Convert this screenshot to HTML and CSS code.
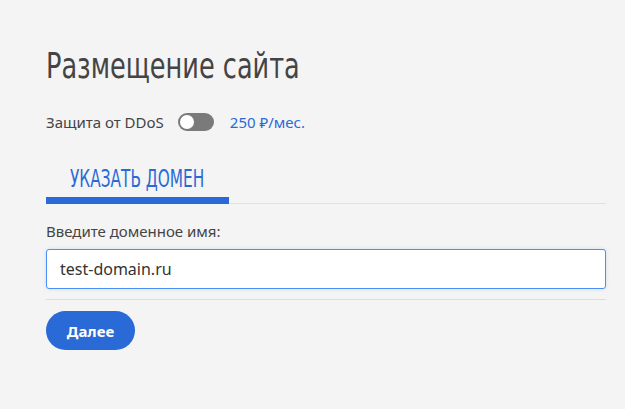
FILE: index.html
```html
<!DOCTYPE html>
<html lang="ru">
<head>
<meta charset="utf-8">
<link rel="stylesheet" href="styles.css">
</head>
<body>
<main class="page">
  <h1 class="title"><span class="narrow">Размещение сайта</span></h1>
  <div class="ddos">
    <span class="ddos-label">Защита от DDoS</span>
    <span class="toggle"><span class="knob"></span></span>
    <span class="price">250 ₽/мес.</span>
  </div>
  <div class="tabs">
    <div class="tab active"><span class="tab-text">УКАЗАТЬ ДОМЕН</span></div>
  </div>
  <label class="label">Введите доменное имя:</label>
  <div class="input">test-domain.ru</div>
  <div class="sep"></div>
  <button class="btn">Далее</button>
</main>
</body>
</html>
```
FILE: styles.css
```css
html, body {
  margin: 0;
  padding: 0;
  background: #f4f4f4;
}
body {
  font-family: "Noto Sans", "Open Sans", sans-serif;
  color: #444;
}
.page {
  width: 560px;
  padding: 44px 0 0 46px;
}
.title {
  margin: 0;
  font-family: "DejaVu Sans", sans-serif;
  font-stretch: condensed;
  font-weight: 400;
  font-size: 36px;
  line-height: 44px;
  color: #444;
  white-space: nowrap;
}
.narrow {
  display: inline-block;
  transform: scaleX(0.79);
  transform-origin: left center;
}
.ddos {
  display: flex;
  align-items: center;
  margin-top: 22px;
  height: 24px;
  font-size: 15px;
}
.ddos-label {
  color: #444;
}
.toggle {
  width: 36px;
  height: 18px;
  border-radius: 9px;
  background: #7a7a7a;
  margin-left: 14px;
  display: flex;
  align-items: center;
  padding-left: 2px;
  box-sizing: border-box;
}
.knob {
  width: 14px;
  height: 14px;
  border-radius: 50%;
  background: #fff;
}
.price {
  margin-left: 16px;
  color: #2a6ad6;
}
.tabs {
  margin-top: 31px;
  border-bottom: 1px solid #e2e2e2;
  display: flex;
}
.tab {
  width: 183px;
  box-sizing: border-box;
  padding-left: 24px;
  font-family: "DejaVu Sans", sans-serif;
  font-stretch: condensed;
  white-space: nowrap;
  font-size: 24px;
  line-height: 28px;
  color: #2a6ad6;
  padding-bottom: 4px;
  border-bottom: 7px solid #2a6ad6;
  margin-bottom: -1px;
}
.tab-text {
  display: inline-block;
  transform: scaleX(0.71);
  transform-origin: left center;
}
.label {
  display: block;
  margin-top: 17px;
  font-size: 15px;
  line-height: 20px;
  color: #444;
}
.input {
  margin-top: 8px;
  height: 40px;
  box-sizing: border-box;
  background: #fff;
  border: 1px solid #4b8ef5;
  border-radius: 3px;
  box-shadow: 0 0 4px rgba(75, 142, 245, 0.2);
  padding: 0 13px;
  display: flex;
  align-items: center;
  font-size: 16px;
  color: #333;
}
.sep {
  margin-top: 10px;
  height: 1px;
  background: #dcdcdc;
}
.btn {
  margin-top: 11px;
  width: 89px;
  height: 39px;
  border: none;
  border-radius: 20px;
  background: #2a6ad6;
  color: #fff;
  font-family: "Noto Sans", sans-serif;
  font-weight: 700;
  font-size: 15px;
  padding: 0;
}
```
